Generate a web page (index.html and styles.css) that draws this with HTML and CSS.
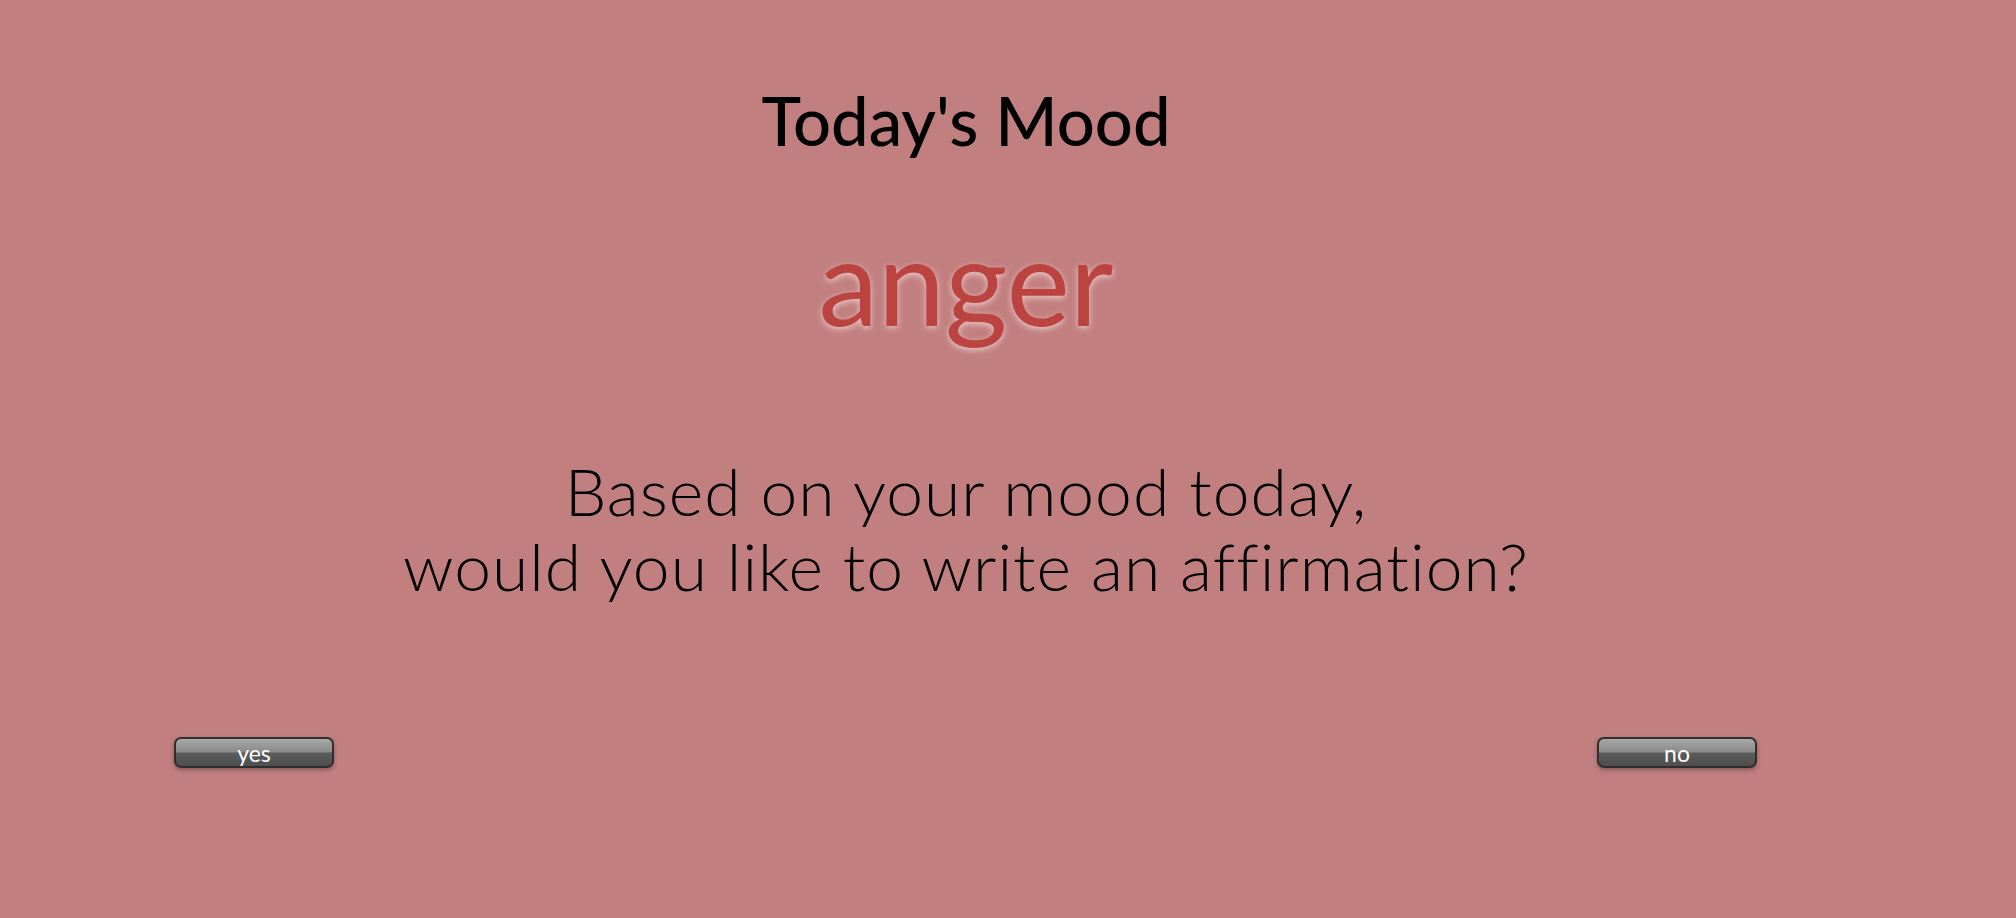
FILE: index.html
```html
<!DOCTYPE html>
<html>
<head>
<meta charset="utf-8">
<link rel="stylesheet" href="styles.css">
<title>Today's Mood</title>
</head>
<body>
<main class="page">
  <h1 class="title">Today's Mood</h1>
  <div class="mood">anger</div>
  <p class="question">Based on your mood today,<br>would you like to write an affirmation?</p>
  <div class="actions">
    <button class="btn">yes</button>
    <button class="btn">no</button>
  </div>
</main>
</body>
</html>
```
FILE: styles.css
```css
html, body {
  margin: 0;
  padding: 0;
  background: #c27f7f;
  height: 100%;
}
body {
  font-family: "Lato", "Open Sans", sans-serif;
  color: #000;
}
.page {
  width: 1932px;
  display: flex;
  flex-direction: column;
  align-items: center;
}
.title {
  margin: 86px 0 0;
  font-size: 67px;
  line-height: 68px;
  font-weight: 500;
}
.mood {
  margin-top: 66px;
  font-size: 120px;
  line-height: 120px;
  color: #bb4440;
  font-weight: 400;
  text-shadow: 0 2px 6px rgba(255, 235, 235, 0.7);
}
.question {
  margin: 113px 0 0;
  font-size: 66px;
  line-height: 75px;
  letter-spacing: 1px;
  font-weight: 300;
  text-align: center;
}
.actions {
  align-self: stretch;
  display: flex;
  justify-content: space-between;
  padding: 0 175px 0 174px;
  margin-top: 134px;
}
.btn {
  width: 160px;
  height: 31px;
  border: 2px solid #2e2e2e;
  border-radius: 7px;
  background: linear-gradient(to bottom, #a8a8a8 0%, #8a8a8a 48%, #5c5c5c 52%, #4e4e4e 100%);
  color: #fff;
  font-family: "Lato", sans-serif;
  font-size: 23px;
  line-height: 24px;
  padding: 0;
  box-shadow: 0 2px 4px rgba(0, 0, 0, 0.3);
}
```
